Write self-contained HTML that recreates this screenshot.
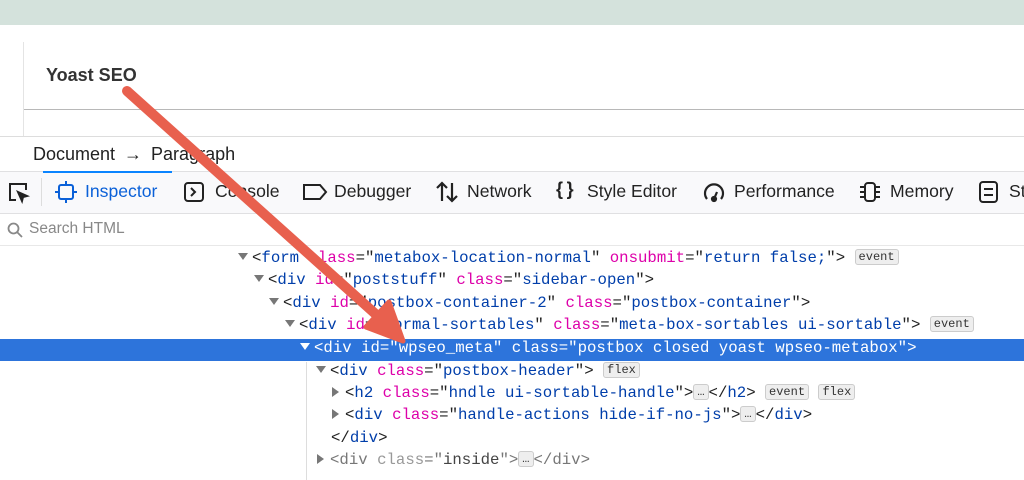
<html><head><style>
body{margin:0;width:1024px;height:480px;overflow:hidden;background:#fff;font-family:"Liberation Sans",sans-serif;position:relative}
.a{position:absolute}
.m{font-family:"Liberation Mono",monospace;font-size:15.7px;white-space:pre;color:#222}
.at{color:#dd00a9}
.v{color:#003eaa}
.b{font-size:12px;border:1px solid #ccc;background:#eee;border-radius:3px;padding:0 3px;color:#333;position:relative;top:-2px}
.tb{font-size:17.6px;color:#222;top:181px}
.tri{display:inline-block;width:0;height:0;border-left:5px solid transparent;border-right:5px solid transparent;border-top:7px solid #777;margin-right:4px;position:relative;top:-2px}
.trr{display:inline-block;width:0;height:0;border-top:5px solid transparent;border-bottom:5px solid transparent;border-left:7px solid #777;margin-right:6px}
</style></head><body>
<div class="a" style="left:0;top:0;width:1024px;height:25px;background:#d4e2dc"></div>
<div class="a" style="left:23px;top:42px;width:1px;height:94px;background:#e4e4e4"></div>
<div class="a" style="left:46px;top:65px;font-size:18px;font-weight:bold;color:#333">Yoast SEO</div>
<div class="a" style="left:24px;top:109px;width:1000px;height:1px;background:#b8b8b8"></div>
<div class="a" style="left:0;top:136px;width:1024px;height:1px;background:#ddd"></div>
<div class="a" style="left:33px;top:144px;font-size:18px;color:#222;word-spacing:4px">Document → Paragraph</div>
<div class="a" style="left:0;top:171px;width:1024px;height:41px;background:#f9f9fb;border-top:1px solid #e0e0e2;border-bottom:1px solid #e0e0e2"></div>
<div class="a" style="left:43px;top:171px;width:129px;height:2px;background:#0a84ff"></div>
<div class="a" style="left:41px;top:178px;width:1px;height:28px;background:#ddd"></div>
<svg class="a" style="left:6px;top:180px" width="24" height="24" viewBox="0 0 24 24" fill="none" stroke="#222" stroke-width="2"><path d="M10 20H4V4h16v6"/><path d="M12 12l9 4-4 1-1 4z" fill="#222"/></svg>
<svg class="a" style="left:54px;top:180px" width="24" height="24" viewBox="0 0 24 24" fill="none" stroke="#0a60d8" stroke-width="2"><rect x="5" y="5" width="14" height="14" rx="2"/><path d="M12 1v4M12 19v4M1 12h4M19 12h4"/></svg>
<div class="a tb" style="left:85px;color:#0a60d8">Inspector</div>
<svg class="a" style="left:183px;top:181px" width="22" height="22" viewBox="0 0 22 22" fill="none" stroke="#222" stroke-width="2"><rect x="2" y="2" width="18" height="18" rx="3"/><path d="M8 7l4 4-4 4"/></svg>
<div class="a tb" style="left:215px">Console</div>
<svg class="a" style="left:302px;top:183px" width="26" height="18" viewBox="0 0 26 18" fill="none" stroke="#222" stroke-width="2"><path d="M2 2h16l6 7-6 7H2z"/></svg>
<div class="a tb" style="left:334px">Debugger</div>
<svg class="a" style="left:435px;top:180px" width="24" height="24" viewBox="0 0 24 24" fill="none" stroke="#222" stroke-width="2.2"><path d="M7 21V3M2 8l5-5 5 5M17 3v18M12 16l5 5 5-5"/></svg>
<div class="a tb" style="left:467px">Network</div>
<div class="a tb" style="left:556px;font-weight:bold;top:179px;font-size:18px">{&thinsp;}</div>
<div class="a tb" style="left:587px">Style Editor</div>
<svg class="a" style="left:702px;top:180px" width="24" height="24" viewBox="0 0 24 24" fill="none" stroke="#222" stroke-width="2.2"><path d="M5 19A9 9 0 1 1 19 19"/><circle cx="12" cy="19" r="2" fill="#222"/><path d="M12 19l3-7"/></svg>
<div class="a tb" style="left:734px">Performance</div>
<svg class="a" style="left:858px;top:180px" width="24" height="24" viewBox="0 0 24 24" fill="none" stroke="#222" stroke-width="2"><rect x="7" y="3" width="10" height="18" rx="3"/><path d="M2 7h4M2 12h4M2 17h4M18 7h4M18 12h4M18 17h4"/></svg>
<div class="a tb" style="left:890px">Memory</div>
<svg class="a" style="left:978px;top:180px" width="22" height="24" viewBox="0 0 22 24" fill="none" stroke="#222" stroke-width="2"><rect x="2" y="2" width="17" height="20" rx="3"/><path d="M6 9h9M6 15h9"/></svg>
<div class="a tb" style="left:1009px">St</div>
<svg class="a" style="left:7px;top:222px" width="16" height="16" viewBox="0 0 16 16" fill="none" stroke="#888" stroke-width="1.8"><circle cx="6.5" cy="6.5" r="5"/><path d="M10 10l5 5"/></svg>
<div class="a" style="left:29px;top:220px;font-size:15.5px;color:#888">Search HTML</div>
<div class="a" style="left:0;top:245px;width:1024px;height:1px;background:#e8e8e8"></div>
<div class="a" style="left:0;top:339px;width:1024px;height:22px;background:#2d74db"></div>
<div class="a" style="left:306px;top:362px;width:1px;height:118px;background:#ddd"></div>
<div class="a m" style="left:238px;top:249px"><span class="tri"></span>&lt;<span class="v">form</span> <span class="at">class</span>="<span class="v">metabox-location-normal</span>" <span class="at">onsubmit</span>="<span class="v">return false;</span>"&gt; <span class="b">event</span></div>
<div class="a m" style="left:254px;top:271px"><span class="tri"></span>&lt;<span class="v">div</span> <span class="at">id</span>="<span class="v">poststuff</span>" <span class="at">class</span>="<span class="v">sidebar-open</span>"&gt;</div>
<div class="a m" style="left:269px;top:294px"><span class="tri"></span>&lt;<span class="v">div</span> <span class="at">id</span>="<span class="v">postbox-container-2</span>" <span class="at">class</span>="<span class="v">postbox-container</span>"&gt;</div>
<div class="a m" style="left:285px;top:316px"><span class="tri"></span>&lt;<span class="v">div</span> <span class="at">id</span>="<span class="v">normal-sortables</span>" <span class="at">class</span>="<span class="v">meta-box-sortables ui-sortable</span>"&gt; <span class="b">event</span></div>
<div class="a m" style="left:300px;top:339px;color:#fff"><span class="tri" style="border-top-color:#fff"></span>&lt;div id="wpseo_meta" class="postbox closed yoast wpseo-metabox"&gt;</div>
<div class="a m" style="left:316px;top:362px"><span class="tri"></span>&lt;<span class="v">div</span> <span class="at">class</span>="<span class="v">postbox-header</span>"&gt; <span class="b">flex</span></div>
<div class="a m" style="left:332px;top:384px"><span class="trr"></span>&lt;<span class="v">h2</span> <span class="at">class</span>="<span class="v">hndle ui-sortable-handle</span>"&gt;<span class="b">…</span>&lt;/<span class="v">h2</span>&gt; <span class="b">event</span> <span class="b">flex</span></div>
<div class="a m" style="left:332px;top:406px"><span class="trr"></span>&lt;<span class="v">div</span> <span class="at">class</span>="<span class="v">handle-actions hide-if-no-js</span>"&gt;<span class="b">…</span>&lt;/<span class="v">div</span>&gt;</div>
<div class="a m" style="left:331px;top:429px">&lt;/<span class="v">div</span>&gt;</div>
<div class="a m" style="left:317px;top:451px;color:#777"><span class="trr"></span>&lt;div <span style="color:#999">class</span>="<span style="color:#444">inside</span>"&gt;<span class="b">…</span>&lt;/div&gt;</div>
<svg class="a" style="left:0;top:0" width="1024" height="480"><line x1="127" y1="91" x2="380" y2="318" stroke="#e8604e" stroke-width="10" stroke-linecap="round"/><path d="M403 341 L366 327 L389 302 Z" fill="#e8604e" stroke="#e8604e" stroke-width="5" stroke-linejoin="round"/></svg>
</body></html>
